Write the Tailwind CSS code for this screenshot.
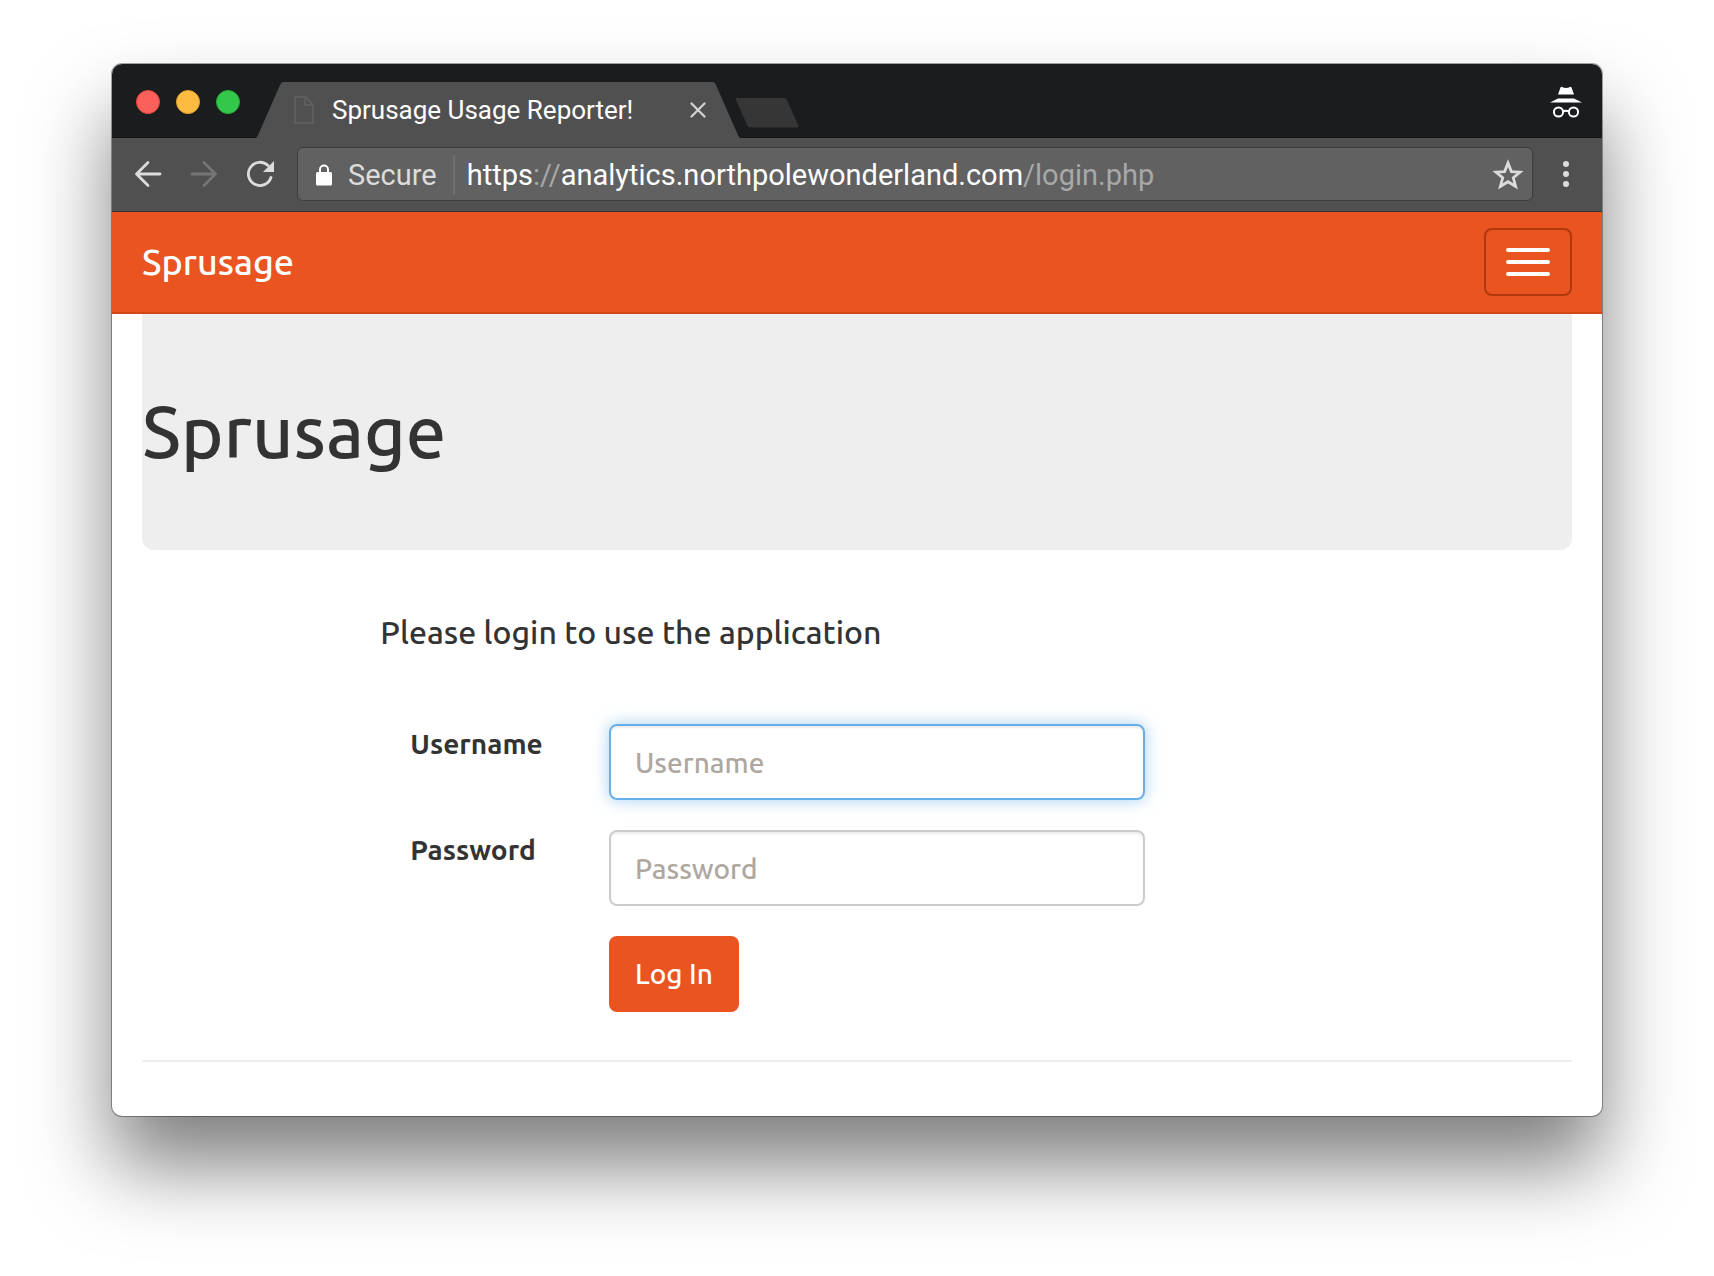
<!DOCTYPE html>
<html lang="en">
<head>
<meta charset="utf-8">
<title>Sprusage Usage Reporter!</title>
<script src="https://cdn.jsdelivr.net/npm/@tailwindcss/browser@4"></script>
</head>
<body class="bg-white px-28 pt-16 pb-40 font-['Ubuntu','Noto_Sans',sans-serif] text-[#333]">
<div class="overflow-hidden rounded-[10px] bg-white shadow-[0_0_0_1px_rgba(0,0,0,0.35),0_50px_80px_rgba(0,0,0,0.5)]">

  <!-- Browser chrome -->
  <header class="font-['Roboto',sans-serif]">
    <div class="flex h-[74px] items-end bg-[#1b1c1e] pl-6 shadow-[inset_0_-1px_0_#141414]">
      <div class="flex h-full items-center gap-4 pt-0.5">
        <button aria-label="Close" class="size-6 rounded-full border border-[#e2463f] bg-[#fc605b]"></button>
        <button aria-label="Minimize" class="size-6 rounded-full border border-[#e0a032] bg-[#fdbc40]"></button>
        <button aria-label="Zoom" class="size-6 rounded-full border border-[#24ab37] bg-[#34c84a]"></button>
      </div>
      <div class="ml-[15px] flex h-14">
        <svg class="h-14 w-7 shrink-0" viewBox="0 0 28 56" fill="#505050"><path d="M0 56C2 56 2.500 54 3.500 52L25 3Q26.500 0 28 0V56Z"/></svg>
        <div class="flex w-[430px] items-center bg-[#505050] pl-[11px] pr-[3px]">
          <svg class="h-7 w-5 shrink-0" viewBox="0 0 20 28" fill="none" stroke="#5e5e5e" stroke-width="2"><path d="M1 1H12L19 9V27H1ZM11 1V9H19"/></svg>
          <span class="ml-[18px] flex-1 whitespace-nowrap text-[26px] leading-8 text-white">Sprusage Usage Reporter!</span>
          <button aria-label="Close tab" class="flex size-6 items-center justify-center">
            <svg class="size-4" viewBox="0 0 16 16" stroke="#d4d4d4" stroke-width="2.200" stroke-linecap="round"><path d="M1.500 1.500L14.500 14.500M14.500 1.500L1.500 14.500"/></svg>
          </button>
        </div>
        <svg class="h-14 w-7 shrink-0" viewBox="0 0 28 56" fill="#505050"><path d="M0 0Q1.500 0 3 3L24.500 52C25.500 54 26 56 28 56H0Z"/></svg>
        <button aria-label="New tab" class="-ml-1.5 mt-4 h-[30px] w-16">
          <svg class="h-[30px] w-16" viewBox="0 0 64 30" fill="#363636"><path d="M2 0H49Q51 0 52 2L63 27Q64 29.500 62 29.500H16Q13 29.500 12 27L1 2Q0 0 2 0Z"/></svg>
        </button>
      </div>
      <svg class="mb-5 ml-auto mr-5 h-8 w-8" viewBox="0 0 32 32" fill="#fff">
        <path d="M10.500 1.500Q11 .5 12 1Q16 3 20 1Q21 .5 21.500 1.500L24 8.500H8ZM8 12.500H24L32 16.500H0Z"/>
        <g fill="none" stroke="#fff" stroke-width="2"><circle cx="8.500" cy="26" r="4.600"/><circle cx="23.500" cy="26" r="4.600"/><path d="M13 25.500Q16 24 19 25.500"/></g>
      </svg>
    </div>

    <div class="flex h-[74px] items-center border-b border-[#333] bg-[#505050] pb-px pl-[22px]">
      <button aria-label="Back"><svg class="size-7" viewBox="0 0 28 28" fill="none" stroke="#dcdcdc" stroke-width="2.800" stroke-linecap="round" stroke-linejoin="round"><path d="M26 14H3M14 2.500L2.500 14L14 25.500"/></svg></button>
      <button aria-label="Forward" class="ml-7" disabled><svg class="size-7" viewBox="0 0 28 28" fill="none" stroke="#757575" stroke-width="2.800" stroke-linecap="round" stroke-linejoin="round"><path d="M2 14H25M14 2.500L25.500 14L14 25.500"/></svg></button>
      <button aria-label="Reload" class="ml-7"><svg class="size-7" viewBox="0 0 28 28"><path d="M22 5.500A11.600 11.600 0 1 0 25 17.500" fill="none" stroke="#dcdcdc" stroke-width="2.800" stroke-linecap="round"/><path d="M28 1V12H17Z" fill="#dcdcdc"/></svg></button>
      <div class="ml-[23px] flex h-[54px] flex-1 items-center rounded-md border border-[#3d3d3d] bg-[#616161] pl-[18px] pr-2 pt-0.5 text-[29px] leading-9">
        <svg class="h-[22px] w-4 shrink-0" viewBox="0 0 16 22"><rect y="8" width="16" height="13.500" rx="1.500" fill="#fff"/><path d="M4 9V5.500A4 4 0 0 1 12 5.500V9" fill="none" stroke="#fff" stroke-width="2"/></svg>
        <span class="ml-4 text-[#dcdcdc]">Secure</span>
        <span class="ml-4 h-10 w-0.5 bg-[#6e6e6e]"></span>
        <span class="ml-3 flex-1 whitespace-nowrap text-[#a8a8a8]"><span class="text-white">https</span>://<span class="text-white">analytics.northpolewonderland.com</span>/login.php</span>
        <button aria-label="Bookmark this page"><svg class="size-8" viewBox="0 0 32 32" fill="none" stroke="#dcdcdc" stroke-width="2.800"><path d="M16 4L19.400 12.600L28 13.200L21.300 18.800L23.600 27.400L16 22.700L8.400 27.400L10.700 18.800L4 13.200L12.600 12.600Z"/></svg></button>
      </div>
      <button aria-label="Menu" class="ml-[19px] mr-[22px] flex w-7 flex-col items-center gap-1"><span class="size-1.5 rounded-full bg-[#dcdcdc]"></span><span class="size-1.5 rounded-full bg-[#dcdcdc]"></span><span class="size-1.5 rounded-full bg-[#dcdcdc]"></span></button>
    </div>
  </header>

  <!-- Page -->
  <nav class="flex h-[102px] items-center justify-between border-b-2 border-[#d34615] bg-[#e95420] px-[30px]">
    <a href="#" class="text-[36px] font-medium leading-10 text-white">Sprusage</a>
    <button aria-label="Toggle navigation" class="flex h-[68px] w-[88px] flex-col items-center justify-center gap-2 rounded-lg border-2 border-[#ae3910]">
      <span class="h-1 w-11 rounded-sm bg-white"></span><span class="h-1 w-11 rounded-sm bg-white"></span><span class="h-1 w-11 rounded-sm bg-white"></span>
    </button>
  </nav>

  <main class="px-[30px] pb-[54px]">
    <div class="rounded-b-xl bg-[#eee] py-[78px]">
      <h1 class="text-[72px] font-medium leading-[80px]">Sprusage</h1>
    </div>
    <div class="grid grid-cols-12 pt-[62px] pb-12">
      <div class="col-span-8 col-start-3">
        <p class="text-[32px] font-medium leading-10">Please login to use the application</p>
        <form class="mt-[72px] flex w-5/6 flex-col gap-[30px]">
          <div class="grid grid-cols-4">
            <label for="username" class="pl-[30px] text-[28px] font-bold leading-10">Username</label>
            <div class="col-span-3 px-[30px]">
              <input id="username" type="text" placeholder="Username" class="h-[76px] w-full rounded-lg border-2 border-[#66afe9] px-6 text-[28px] font-medium shadow-[inset_0_2px_2px_rgba(0,0,0,0.075),0_0_16px_rgba(102,175,233,0.6)] outline-none placeholder:text-[#aea79f]">
            </div>
          </div>
          <div class="grid grid-cols-4">
            <label for="password" class="pl-[30px] text-[28px] font-bold leading-10">Password</label>
            <div class="col-span-3 px-[30px]">
              <input id="password" type="password" placeholder="Password" class="h-[76px] w-full rounded-lg border-2 border-[#ccc] px-6 text-[28px] font-medium shadow-[inset_0_2px_2px_rgba(0,0,0,0.075)] outline-none placeholder:text-[#aea79f]">
            </div>
          </div>
          <div class="grid grid-cols-4">
            <div class="col-span-3 col-start-2 px-[30px]">
              <button type="submit" class="h-[76px] w-[130px] rounded-lg bg-[#e95420] text-[28px] font-medium text-white">Log In</button>
            </div>
          </div>
        </form>
      </div>
    </div>
    <hr class="border-t-2 border-[#eee]">
  </main>
</div>
</body>
</html>
